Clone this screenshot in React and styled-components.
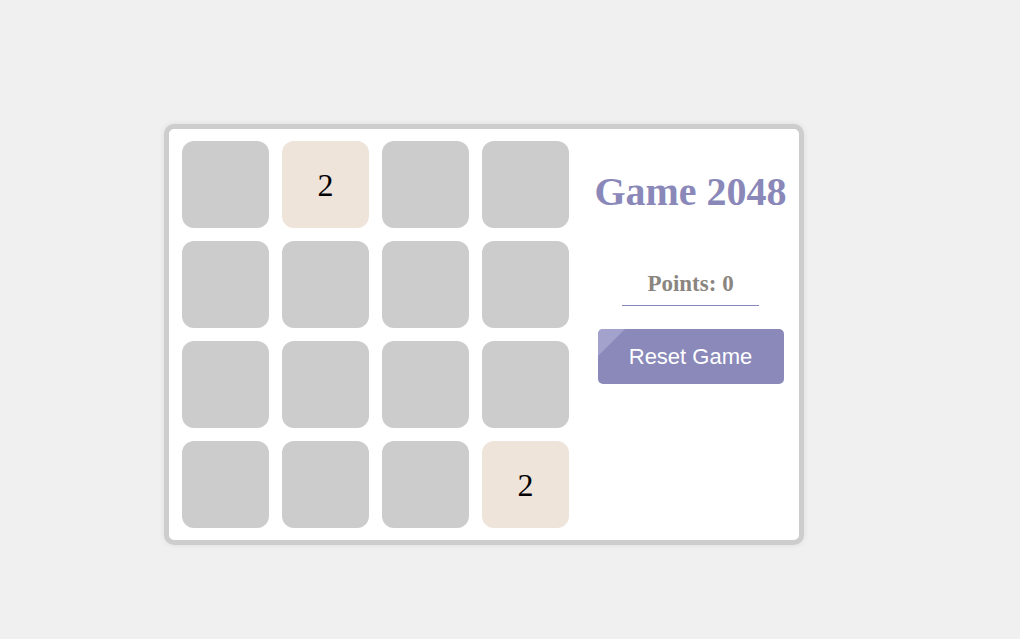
import React from 'react'
import styled, { createGlobalStyle } from 'styled-components'

const board = [
  0, 2, 0, 0,
  0, 0, 0, 0,
  0, 0, 0, 0,
  0, 0, 0, 2,
]

function App() {
  return (
    <>
      <GlobalStyle />
      <Page>
        <Card>
          <Grid>
            {board.map((v, i) => (
              <Tile key={i} $filled={v > 0}>{v > 0 ? v : ''}</Tile>
            ))}
          </Grid>
          <Side>
            <Title>Game 2048</Title>
            <Points>Points: 0</Points>
            <ResetButton>Reset Game</ResetButton>
          </Side>
        </Card>
      </Page>
    </>
  )
}

const GlobalStyle = createGlobalStyle`
  html, body {
    margin: 0;
    padding: 0;
    background: #f0f0f0;
  }
`

const Page = styled.div`
  min-height: 639px;
  padding: 124px 0 0 164px;
  box-sizing: border-box;
`

const Card = styled.div`
  display: flex;
  width: 640px;
  box-sizing: border-box;
  background: #fff;
  border: 5px solid #cdcdcd;
  border-radius: 10px;
  box-shadow: 0 0 6px rgba(0, 0, 0, 0.08);
  padding: 12px 0 12px 13px;
`

const Grid = styled.div`
  display: grid;
  grid-template-columns: repeat(4, 87px);
  grid-auto-rows: 87px;
  gap: 13px;
`

const Tile = styled.div`
  display: flex;
  align-items: center;
  justify-content: center;
  border-radius: 12px;
  background: ${p => (p.$filled ? '#eee4da' : '#cccccc')};
  font-family: "Liberation Serif", serif;
  font-size: 32px;
  padding-top: 2px;
  box-sizing: border-box;
  color: #000;
`

const Side = styled.div`
  flex: 1;
  margin-left: 13px;
  display: flex;
  flex-direction: column;
  align-items: center;
`

const Title = styled.h1`
  margin: 27px 0 0;
  font-family: "Liberation Serif", serif;
  font-size: 40px;
  font-weight: bold;
  color: #8a88b9;
`

const Points = styled.div`
  margin-top: 56px;
  width: 137px;
  padding-bottom: 8px;
  border-bottom: 1px solid #8a88b9;
  text-align: center;
  font-family: "Liberation Serif", serif;
  font-size: 23px;
  font-weight: bold;
  color: #8b8580;
`

const ResetButton = styled.button`
  position: relative;
  overflow: hidden;
  margin-top: 23px;
  width: 186px;
  height: 55px;
  border: none;
  border-radius: 5px;
  background: #8a89ba;
  color: #fff;
  font-family: "Liberation Sans", Arial, sans-serif;
  font-size: 22px;
  cursor: pointer;
  &::before {
    content: '';
    position: absolute;
    top: 0;
    left: 0;
    border-style: solid;
    border-width: 27px 27px 0 0;
    border-color: #a3a2cc transparent transparent transparent;
  }
`

export default App
